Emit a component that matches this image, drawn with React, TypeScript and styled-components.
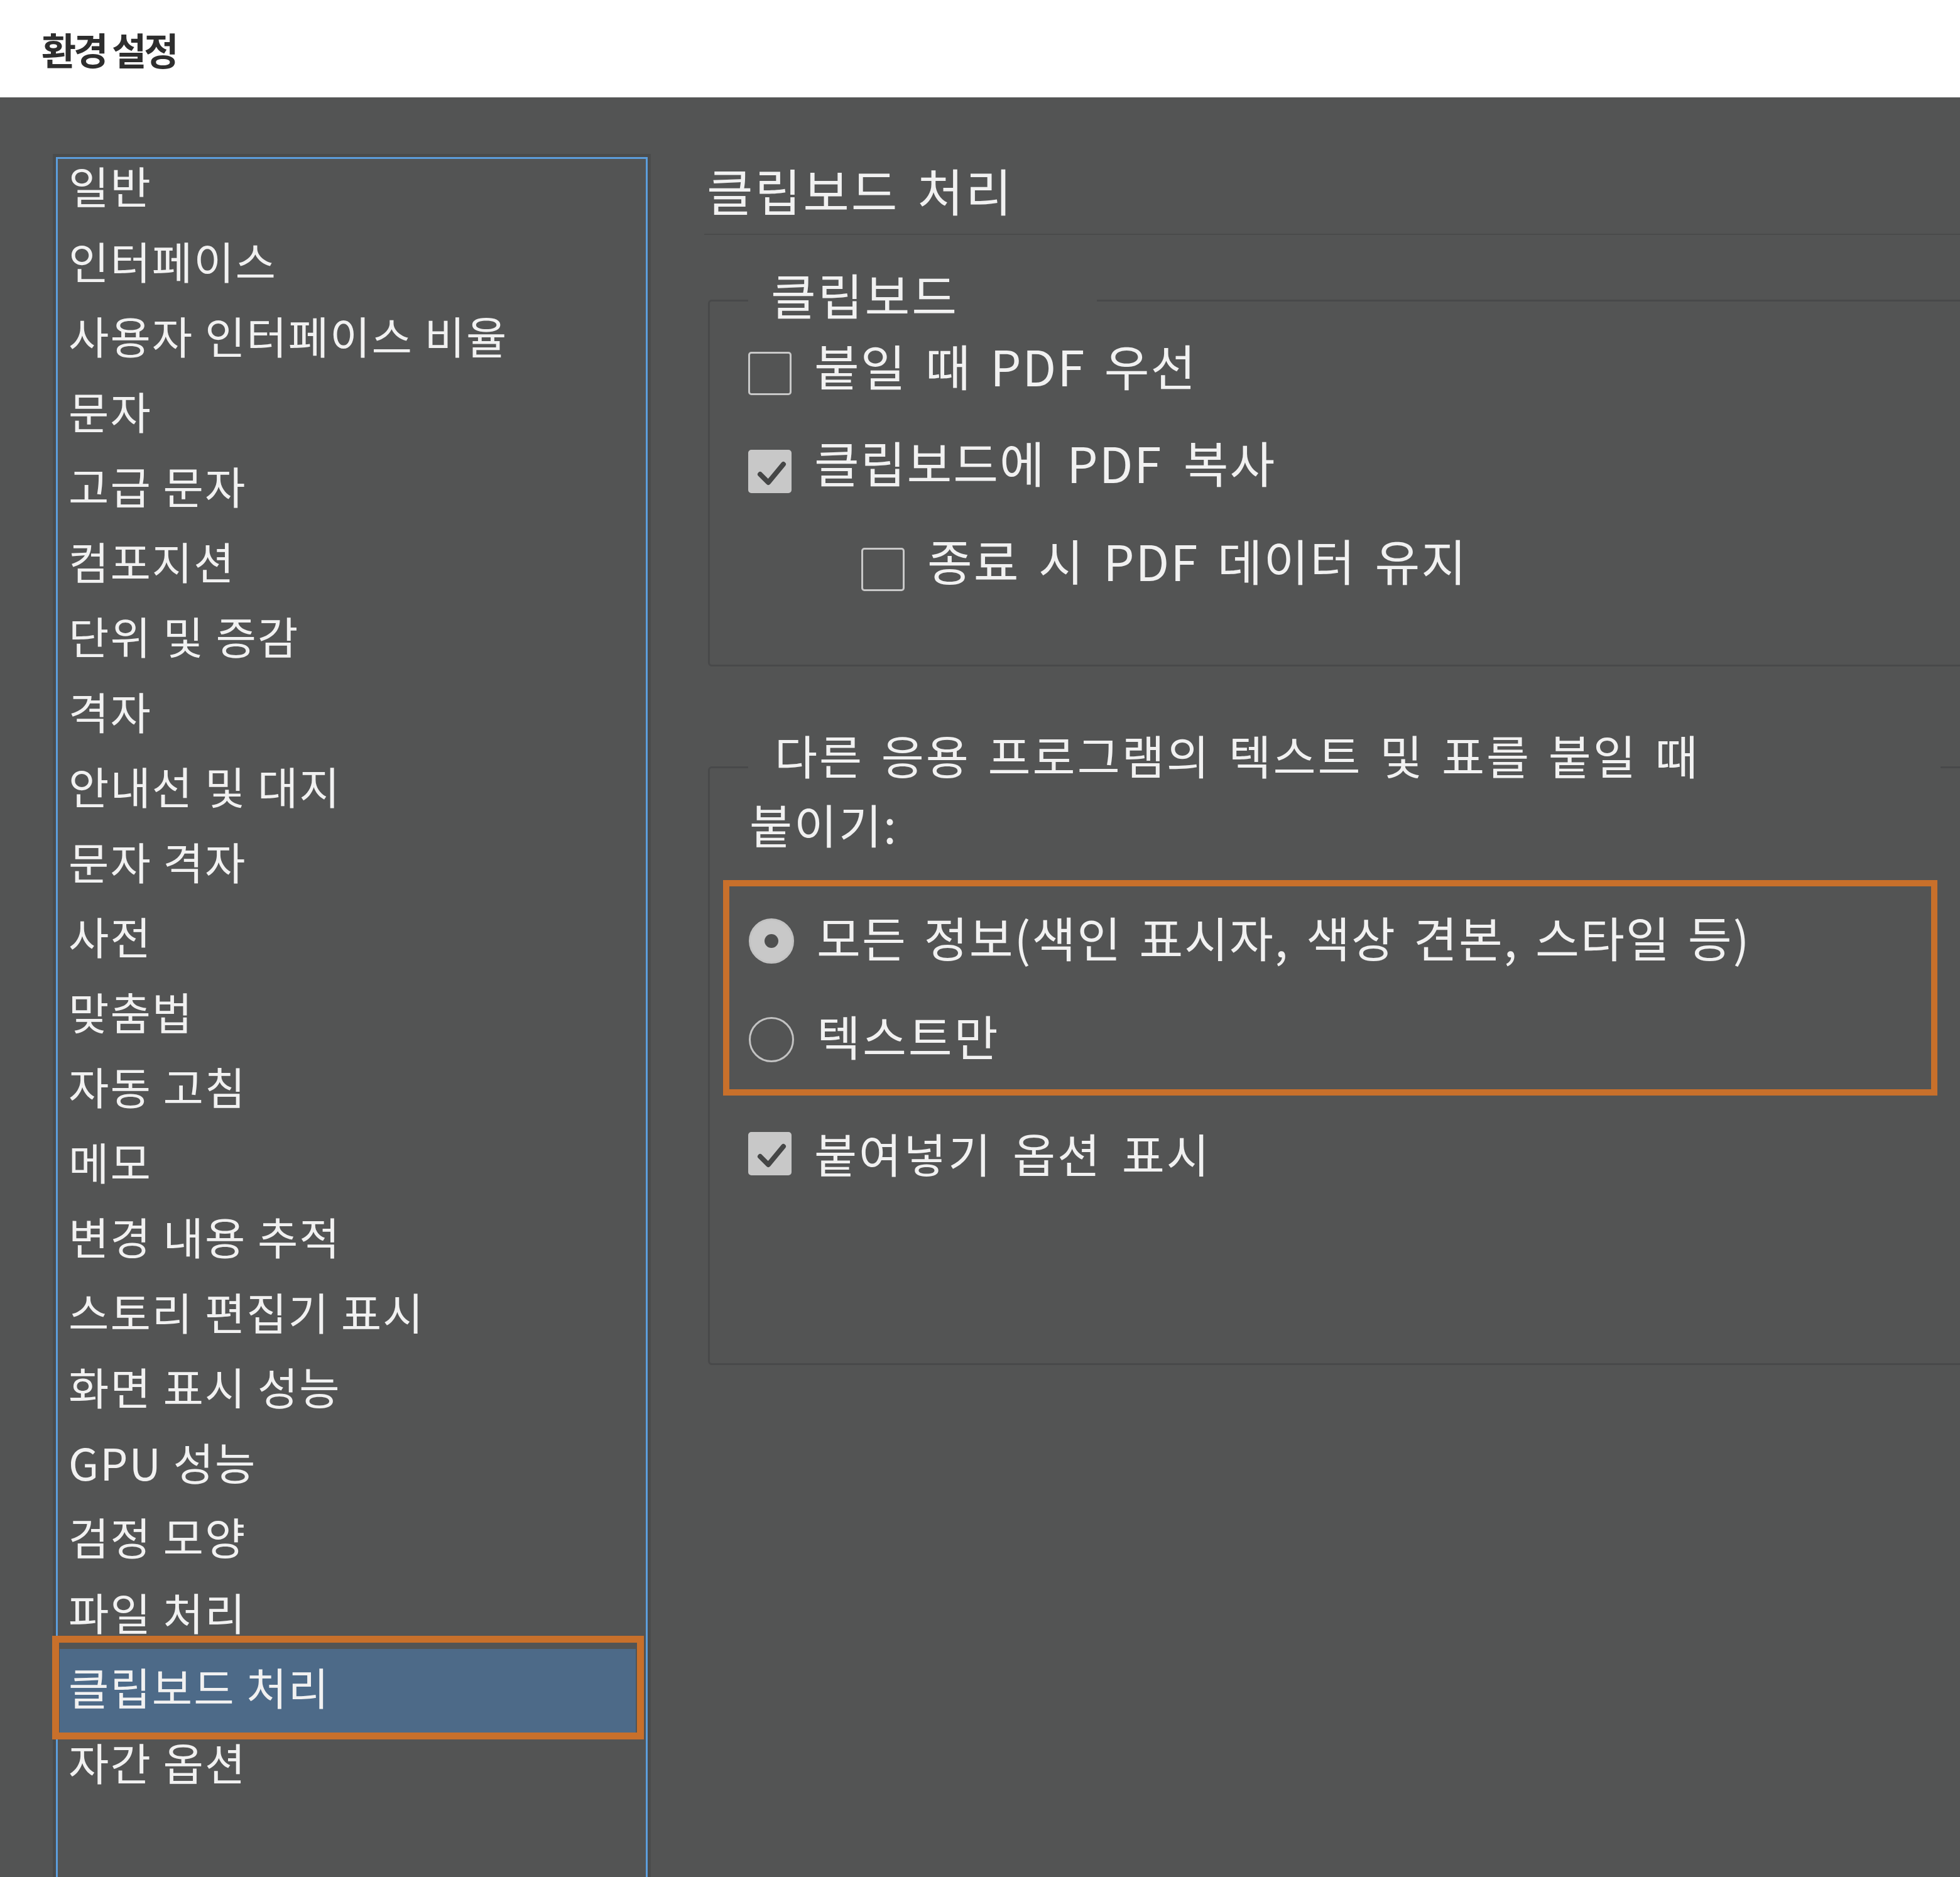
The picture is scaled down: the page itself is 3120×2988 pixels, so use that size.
import styled, { createGlobalStyle, css } from 'styled-components';

const GlobalStyle = createGlobalStyle`
  html, body {
    margin: 0;
    padding: 0;
    background: #535454;
  }
  body {
    font-family: "Noto Sans CJK KR", "Noto Sans", sans-serif;
  }
`;

const Window = styled.div`
  width: 3120px;
  height: 2988px;
  overflow: hidden;
  display: flex;
  flex-direction: column;
  background: #535454;
`;

const TitleBar = styled.header`
  flex: none;
  height: 155px;
  box-sizing: border-box;
  padding-left: 66px;
  display: flex;
  align-items: center;
  background: #ffffff;
`;

const Title = styled.h1`
  margin: 0;
  font-size: 60px;
  font-weight: 700;
  line-height: 1;
  letter-spacing: -4px;
  color: #2e2e2e;
`;

const Content = styled.div`
  flex: 1;
  min-height: 0;
  display: flex;
  align-items: flex-start;
  padding: 95px 0 0 89px;
`;

const CategoryList = styled.ul`
  flex: none;
  list-style: none;
  margin: 0;
  padding: 0;
  width: 942px;
  height: 2800px;
  box-sizing: border-box;
  border: 3px solid #5c9ddb;
  box-shadow: 0 0 0 5px #4a4b4b;
`;

const Category = styled.li<{ $selected?: boolean }>`
  position: relative;
  margin: 0 16px 0 3px;
  padding: 0 0 35.5px 14px;
  font-size: 70px;
  line-height: 84px;
  letter-spacing: 2px;
  color: #f1f1f1;
  white-space: nowrap;

  ${({ $selected }) =>
    $selected &&
    css`
      margin: -18px 16px 4.5px 3px;
      padding: 18px 0 31px 14px;
      background: #4d6a88;
    `}
`;

const Callout = styled.span`
  position: absolute;
  top: -21px;
  bottom: -11px;
  left: -12px;
  right: -13px;
  border: 11px solid #c8702b;
  pointer-events: none;
`;

const Panel = styled.section`
  flex: none;
  width: 2100px;
  margin-left: 90px;
  padding-top: 3px;
`;

const PanelTitle = styled.h2`
  margin: 0;
  padding-left: 4px;
  font-size: 80px;
  font-weight: 400;
  line-height: 96px;
  letter-spacing: 3px;
  word-spacing: 8px;
  color: #f1f1f1;
`;

const Rule = styled.div`
  height: 2px;
  margin-top: 23px;
  background: #4a4b4b;
`;

const Group = styled.fieldset<{ $top: number; $bottom: number }>`
  min-width: 0;
  margin: ${({ $top }) => $top}px 0 0 6px;
  padding: 0 0 ${({ $bottom }) => $bottom}px 61px;
  border: 3px solid #48494a;
  border-radius: 6px;
`;

const Legend = styled.legend<{ $width: number; $size: number; $indent: number; $lift: number }>`
  box-sizing: border-box;
  width: ${({ $width }) => $width}px;
  padding: 0 0 ${({ $lift }) => $lift}px ${({ $indent }) => $indent}px;
  font-size: ${({ $size }) => $size}px;
  line-height: 1;
  letter-spacing: 3px;
  word-spacing: 8px;
  color: #f1f1f1;
  white-space: nowrap;
`;

const Options = styled.div`
  display: flex;
  flex-direction: column;
  gap: 22px;
`;

const Option = styled.label<{ $indent?: number; $height?: number; $top?: number }>`
  display: flex;
  align-items: center;
  gap: 36px;
  height: ${({ $height }) => $height ?? 134}px;
  margin-top: ${({ $top }) => $top ?? 0}px;
  padding-left: ${({ $indent }) => $indent ?? 0}px;
`;

const CheckBox = styled.span<{ $checked?: boolean }>`
  flex: none;
  width: 69px;
  height: 69px;
  box-sizing: border-box;
  border: 3px solid #c8c8c8;
  border-radius: 5px;
  background: ${({ $checked }) => ($checked ? '#c8c8c8' : 'transparent')};
  display: grid;
  place-items: center;
`;

const Radio = styled.span<{ $on?: boolean }>`
  flex: none;
  width: 72px;
  height: 72px;
  box-sizing: border-box;
  border-radius: 50%;
  border: 3px solid #c2c2c2;
  background: ${({ $on }) => ($on ? '#c8c8c8' : 'transparent')};
  display: grid;
  place-items: center;
`;

const RadioDot = styled.span`
  width: 22px;
  height: 22px;
  border-radius: 50%;
  background: #4e4f4f;
`;

const OptionText = styled.span<{ $size: number; $lift: number; $spacing?: number; $words?: number }>`
  font-size: ${({ $size }) => $size}px;
  line-height: 1.2;
  letter-spacing: ${({ $spacing }) => $spacing ?? 2}px;
  word-spacing: ${({ $words }) => $words ?? 10}px;
  padding-bottom: ${({ $lift }) => $lift}px;
  color: #f1f1f1;
  white-space: nowrap;
`;

const PasteLabel = styled.div`
  margin-left: 2px;
  font-size: 74px;
  line-height: 66px;
  letter-spacing: 3px;
  color: #f1f1f1;
`;

const Highlight = styled.div`
  width: 1933px;
  box-sizing: border-box;
  margin: 57px 0 0 -40px;
  padding: 8px 0 1px 31px;
  border: 10px solid #c8702b;
`;

const categories = [
  '일반',
  '인터페이스',
  '사용자 인터페이스 비율',
  '문자',
  '고급 문자',
  '컴포지션',
  '단위 및 증감',
  '격자',
  '안내선 및 대지',
  '문자 격자',
  '사전',
  '맞춤법',
  '자동 고침',
  '메모',
  '변경 내용 추적',
  '스토리 편집기 표시',
  '화면 표시 성능',
  'GPU 성능',
  '검정 모양',
  '파일 처리',
  '클립보드 처리',
  '자간 옵션',
];

const selected = '클립보드 처리';

const Check = () => (
  <svg width="69" height="69" viewBox="0 0 69 69">
    <path d="M16 36 L29 49 L53 20" fill="none" stroke="#454646" strokeWidth="8" strokeLinecap="round" strokeLinejoin="round" />
  </svg>
);

const App = () => (
  <Window>
    <GlobalStyle />
    <TitleBar>
      <Title>환경 설정</Title>
    </TitleBar>
    <Content>
      <CategoryList>
        {categories.map((name) => (
          <Category key={name} $selected={name === selected}>
            {name}
            {name === selected && <Callout />}
          </Category>
        ))}
      </CategoryList>
      <Panel>
        <PanelTitle>클립보드 처리</PanelTitle>
        <Rule />
        <Group $top={55} $bottom={85}>
          <Legend $width={555} $size={78} $indent={36} $lift={20}>
            클립보드
          </Legend>
          <Options>
            <Option>
              <CheckBox />
              <OptionText $size={78} $lift={24}>붙일 때 PDF 우선</OptionText>
            </Option>
            <Option>
              <CheckBox $checked>
                <Check />
              </CheckBox>
              <OptionText $size={78} $lift={28} $words={14}>클립보드에 PDF 복사</OptionText>
            </Option>
            <Option $indent={180}>
              <CheckBox />
              <OptionText $size={78} $lift={28}>종료 시 PDF 데이터 유지</OptionText>
            </Option>
          </Options>
        </Group>
        <Group $top={103} $bottom={267}>
          <Legend $width={1898} $size={74} $indent={42} $lift={40}>
            다른 응용 프로그램의 텍스트 및 표를 붙일 때
          </Legend>
          <PasteLabel>붙이기:</PasteLabel>
          <Highlight>
            <Option $height={157}>
              <Radio $on>
                <RadioDot />
              </Radio>
              <OptionText $size={76} $lift={12} $spacing={2} $words={8}>
                모든 정보(색인 표시자, 색상 견본, 스타일 등)
              </OptionText>
            </Option>
            <Option $height={157}>
              <Radio />
              <OptionText $size={76} $lift={12} $spacing={3}>텍스트만</OptionText>
            </Option>
          </Highlight>
          <Option $top={25}>
            <CheckBox $checked>
              <Check />
            </CheckBox>
            <OptionText $size={74} $lift={2} $spacing={3} $words={12}>붙여넣기 옵션 표시</OptionText>
          </Option>
        </Group>
      </Panel>
    </Content>
  </Window>
);

export default App;
